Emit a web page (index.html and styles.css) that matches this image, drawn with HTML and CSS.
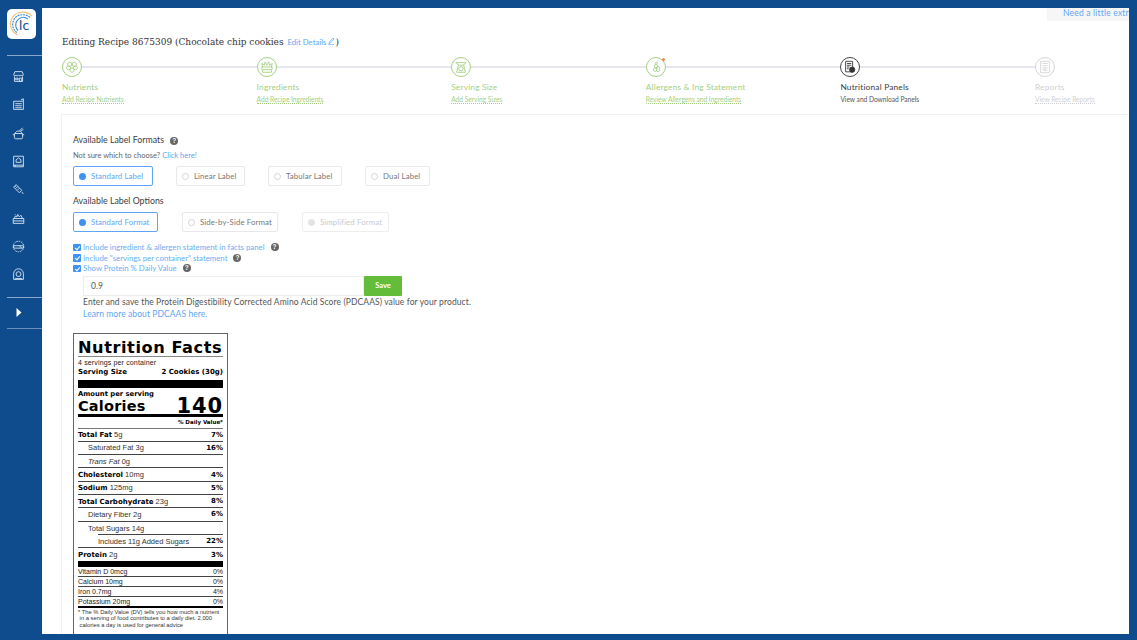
FILE: index.html
```html
<!DOCTYPE html>
<html lang="en">
<head>
<meta charset="utf-8">
<title>Editing Recipe</title>
<link rel="stylesheet" href="styles.css">
</head>
<body>
<div class="app">
  <nav class="side">
    <div class="logo">
      <svg class="logo-arcs" width="26" height="27" viewBox="0 0 26 27" fill="none"><path d="M24 5C18 -1 7 0 3.500 8c-2.500 6 0 13 6 16" stroke="#f3c27b" stroke-width="1.200"/><path d="M22 6.500C17 2 8 3 5.500 9.500c-2 5 0 10 4 12.500" stroke="#3f8fd6" stroke-width="1.200" stroke-dasharray="2 .8"/><path d="M20 8c-4-3-9-2-11.500 2.500-1.500 3.500-.5 7 1.500 9" stroke="#3f8fd6" stroke-width="1.100"/></svg>
      <span class="logo-text">lc</span>
    </div>
    <hr class="side-rule first">
    <ul class="side-icons">
      <li><svg viewBox="0 0 16 16"><path d="M2 6l1.500-4h9L14 6c0 1.500-3 1.500-3 0 0 1.500-3 1.500-3 0 0 1.500-3 1.500-3 0 0 1.500-3 1.500-3 0zM3 8v6h10V8M9 10h3v4H9zM4.500 10h3v2h-3z"/></svg></li>
      <li><svg viewBox="0 0 16 16"><path d="M2 4h12v10H2zM4 7h8M4 9.500h8M4 12h8M11 2l3-1v3"/></svg></li>
      <li><svg viewBox="0 0 16 16"><path d="M3 8h10v5a1.500 1.500 0 0 1-1.500 1.500h-7A1.500 1.500 0 0 1 3 13zM1 9.500h2M13 9.500h2M4 8c0-2 2-3 4-3s4 1 4 3M9 5l4-4M11 5l3-2"/></svg></li>
      <li><svg viewBox="0 0 16 16"><path d="M2 1.500h12v13H2zM2 12.500h12M5 9V6l3-2.500L11 6v3zM4 14.500v-2"/></svg></li>
      <li><svg viewBox="0 0 16 16"><path d="M2 5l3-3 7 7-3 3zM4 4l1 1M7 4.500l-2 2M9 6.500l-2 2M12 11l2 2.500"/></svg></li>
      <li><svg viewBox="0 0 16 16"><path d="M1.500 8h13v6h-13zM1.500 11h13M3 8l1-3 2 1 1-3 2 3 2-2 2 4M4 3l1 1"/></svg></li>
      <li><svg viewBox="0 0 16 16"><circle cx="8" cy="8" r="6.500" stroke-dasharray="2 1"/><path d="M2 7h12v3H2zM9 7l3 3"/></svg></li>
      <li><svg viewBox="0 0 16 16"><path d="M2 14V7a6 6 0 0 1 12 0v7z"/><circle cx="8" cy="7.500" r="3"/><path d="M4 14v-1h8v1"/></svg></li>
    </ul>
    <hr class="side-rule second">
    <div class="expand"><svg width="6" height="9" viewBox="0 0 6 9"><path d="M0.500 0l5 4.500-5 4.500z" fill="#fff"/></svg></div>
    <hr class="side-rule third">
  </nav>
  <main class="main">
    <div class="help-tab">Need a little extra help?</div>
    <h1 class="title">Editing Recipe 8675309 (Chocolate chip cookies <a class="edit">Edit Details <svg width="7" height="8" viewBox="0 0 7 8" fill="none"><path d="M1 7l.4-2 3.600-4 1 1-3.600 4zM0 7.700h6" stroke="#5da6f5" stroke-width=".7"/></svg></a>)</h1>

    <ol class="steps">
      <li class="step done">
        <div class="step-head"><span class="disc"><svg viewBox="0 0 16 16"><circle cx="5.500" cy="5" r="2.500"/><circle cx="10.500" cy="5" r="2.500"/><circle cx="4" cy="9" r="2.200"/><circle cx="12" cy="9" r="2.200"/><circle cx="8" cy="11.500" r="2.500"/></svg></span></div>
        <div class="step-name">Nutrients</div><a class="step-sub">Add Recipe Nutrients</a>
      </li>
      <li class="step done">
        <div class="step-head"><span class="disc"><svg viewBox="0 0 16 16"><path d="M2 8h12l-1 6H3zM3 8L2 4l3 2 1-4 2 4 2-4 1 4 3-2-1 4M3 11h10"/></svg></span></div>
        <div class="step-name">Ingredients</div><a class="step-sub">Add Recipe Ingredients</a>
      </li>
      <li class="step done">
        <div class="step-head"><span class="disc"><svg viewBox="0 0 16 16"><path d="M2 3h12M3 3c0 2 2 3 5 3s5-1 5-3M5 6L3 14h10l-2-8"/><circle cx="8" cy="10" r="2.500"/></svg></span></div>
        <div class="step-name">Serving Size</div><a class="step-sub">Add Serving Sizes</a>
      </li>
      <li class="step done">
        <div class="step-head"><span class="disc dot"><svg viewBox="0 0 16 16"><path d="M9 2c1 2 0 3-1 3s-1-1 0-2zM6 7a2 2 0 1 1 4 0 2 2 0 1 1-4 0zM5 11a2 2 0 1 1 4 0 2 2 0 1 1-4 0zM9 10.500a1.800 1.800 0 1 1 3 0 1.800 1.800 0 1 1-3 0z"/></svg></span></div>
        <div class="step-name">Allergens &amp; Ing Statement</div><a class="step-sub">Review Allergens and Ingredients</a>
      </li>
      <li class="step current">
        <div class="step-head"><span class="disc"><svg viewBox="0 0 16 16"><path d="M3 1.500h8v12H3zM4.500 4h5M4.500 6h5M4.500 8h3M4.500 10h2"/><circle cx="10.500" cy="11" r="3" fill="#333"/></svg></span></div>
        <div class="step-name">Nutritional Panels</div><span class="step-sub plain">View and Download Panels</span>
      </li>
      <li class="step todo">
        <div class="step-head"><span class="disc"><svg viewBox="0 0 16 16"><path d="M3 1.500h10v13H3zM5 4h6M5 6.500h6M5 9h6M5 11.500h6M8 9v4"/></svg></span></div>
        <div class="step-name">Reports</div><a class="step-sub">View Recipe Reports</a>
      </li>
    </ol>

    <section class="card">
      <h2 class="heading">Available Label Formats <span class="q">?</span></h2>
      <p class="hint">Not sure which to choose? <a class="link">Click here!</a></p>
      <div class="choices formats">
        <label class="choice on"><i class="radio"></i>Standard Label</label>
        <label class="choice"><i class="radio"></i>Linear Label</label>
        <label class="choice"><i class="radio"></i>Tabular Label</label>
        <label class="choice"><i class="radio"></i>Dual Label</label>
      </div>
      <h2 class="heading second">Available Label Options</h2>
      <div class="choices options">
        <label class="choice on"><i class="radio"></i>Standard Format</label>
        <label class="choice"><i class="radio"></i>Side-by-Side Format</label>
        <label class="choice off"><i class="radio"></i>Simplified Format</label>
      </div>
      <ul class="checks">
        <li><i class="box"></i>Include ingredient &amp; allergen statement in facts panel <span class="q">?</span></li>
        <li><i class="box"></i>Include "servings per container" statement <span class="q">?</span></li>
        <li><i class="box"></i>Show Protein % Daily Value <span class="q">?</span></li>
      </ul>
      <div class="pdcaas">
        <div class="entry"><div class="input">0.9</div><button class="save">Save</button></div>
        <p class="note">Enter and save the Protein Digestibility Corrected Amino Acid Score (PDCAAS) value for your product.</p>
        <a class="link more">Learn more about PDCAAS here.</a>
      </div>

      <div class="facts">
        <div class="f-title">Nutrition Facts</div>
        <div class="f-servings">4 servings per container</div>
        <div class="f-size"><b>Serving Size</b><b>2 Cookies (30g)</b></div>
        <div class="f-bar"></div>
        <div class="f-amount">Amount per serving</div>
        <div class="f-cal"><b>Calories</b><b class="f-num">140</b></div>
        <div class="f-dv">% Daily Value*</div>
        <div class="f-row"><span><b>Total Fat</b> 5g</span><b>7%</b></div>
        <div class="f-row in1"><span>Saturated Fat 3g</span><b>16%</b></div>
        <div class="f-row in1"><span><em>Trans Fat</em> 0g</span></div>
        <div class="f-row"><span><b>Cholesterol</b> 10mg</span><b>4%</b></div>
        <div class="f-row"><span><b>Sodium</b> 125mg</span><b>5%</b></div>
        <div class="f-row"><span><b>Total Carbohydrate</b> 23g</span><b>8%</b></div>
        <div class="f-row in1"><span>Dietary Fiber 2g</span><b>6%</b></div>
        <div class="f-row in1 partial"><span>Total Sugars 14g</span></div>
        <div class="f-row in2"><span>Includes 11g Added Sugars</span><b>22%</b></div>
        <div class="f-row last"><span><b>Protein</b> 2g</span><b>3%</b></div>
        <div class="f-bar small"></div>
        <div class="f-vit"><span>Vitamin D 0mcg</span><span>0%</span></div>
        <div class="f-vit"><span>Calcium 10mg</span><span>0%</span></div>
        <div class="f-vit"><span>Iron 0.7mg</span><span>4%</span></div>
        <div class="f-vit end"><span>Potassium 20mg</span><span>0%</span></div>
        <p class="f-foot">* The % Daily Value (DV) tells you how much a nutrient<br>&nbsp;in a serving of food contributes to a daily diet. 2,000<br>&nbsp;calories a day is used for general advice</p>
      </div>
    </section>
  </main>
</div>
</body>
</html>
```
FILE: styles.css
```css
* { box-sizing: border-box; }
html, body { margin: 0; height: 100%; overflow: hidden; background: #0e4c8e; }
.app { display: flex; width: 1129px; height: 626px; margin-top: 8px; }

.side { width: 42px; flex: none; padding-top: 1px; display: flex; flex-direction: column; align-items: flex-end; }
.logo { position: relative; width: 28.500px; height: 30px; margin-right: 6.500px; background: #fff; border-radius: 5px; display: flex; align-items: center; justify-content: center; }
.logo-text { position: absolute; left: 12px; top: 8px; font: 400 14px/16px "Lato", sans-serif; letter-spacing: .3px; color: #15508f; }
.side-rule { width: 35px; height: 1px; margin: 0; border: 0; background: #8ba8c9; }
.side-rule.first { margin-top: 16px; }
.side-rule.second { margin-top: 8px; }
.side-icons { list-style: none; margin: 6.500px 0 0; padding: 0; width: 42px; }
.side-icons li { height: 28.300px; padding-left: 12px; display: flex; align-items: center; }
.side-icons svg { width: 13px; height: 13px; fill: none; stroke: #dce6f1; stroke-width: 1.100; }
.expand { width: 42px; height: 30px; padding-left: 16px; display: flex; align-items: center; }
.side-rule.third { background: #6d90b8; }

.main { position: relative; flex: 1; min-width: 0; background: #fff; overflow: hidden; padding-left: 19px; font-family: "Lato", "Open Sans", sans-serif; }
.help-tab { position: absolute; top: 0; right: 0; width: 82px; height: 13px; padding-left: 16px; background: #f6f6f6; color: #5ea6f6; font-size: 8.500px; line-height: 11px; white-space: nowrap; overflow: hidden; letter-spacing: .2px; }
.title { margin: 28px 0 0 1px; font: 400 10px/12px "DejaVu Serif Condensed", "DejaVu Serif", serif; color: #333; white-space: nowrap; }
.edit { font: 7.800px/12px "Lato", sans-serif; color: #5da6f5; margin-left: 1px; }

.steps { list-style: none; margin: 8px 0 0 1px; padding: 0; display: flex; }
.step { width: 194.600px; flex: none; }
.step-head { display: flex; align-items: center; height: 21px; position: relative; }
.step-head::after { content: ""; flex: 1; height: 2px; background: #e6e6ee; }
.step.todo .step-head::after { display: none; }
.disc { position: relative; width: 20px; height: 20px; flex: none; border: 1px solid #a3cf7f; border-radius: 50%; display: flex; align-items: center; justify-content: center; background: #fff; }
.disc svg { width: 14px; height: 14px; fill: none; stroke: #a3cf7f; stroke-width: 1; }
.disc.dot::after { content: ""; position: absolute; top: 0; right: 0; width: 3px; height: 3px; border-radius: 50%; background: #e98a4a; }
.step-name { margin-top: 4px; font-size: 8.300px; line-height: 12px; color: #a3cf7f; letter-spacing: .2px; white-space: nowrap; }
.step-sub { display: table; margin-top: 2px; font-size: 6.600px; line-height: 8px; color: #a3cf7f; border-bottom: 1px dotted #a3cf7f; white-space: nowrap; }
.step.current .disc { border-color: #444; }
.step.current .disc svg { stroke: #333; }
.step.current .step-name { color: #3c3c3c; }
.step-sub.plain { color: #555; border-bottom: 0; }
.step.todo .disc { border-color: #d5d5d8; }
.step.todo .disc svg { stroke: #d5d5d8; }
.step.todo .step-name { color: #cfcfd2; }
.step.todo .step-sub { color: #cfcfd2; border-bottom-color: #cfcfd2; }

.card { margin: 10px 0 0; padding: 19px 0 0 11px; height: 540px; border-top: 1px solid #f0f0f7; border-left: 1px solid #f0f0f7; }
.heading { margin: 0; font-size: 8.800px; line-height: 12px; font-weight: 400; color: #3d3d3d; white-space: nowrap; }
.heading.second { margin-top: 9px; }
.q { display: inline-block; width: 8px; height: 8px; margin-left: 4px; border-radius: 50%; background: #666; color: #fff; font: 700 6.500px/8px "Liberation Sans", sans-serif; text-align: center; vertical-align: middle; }
.hint { margin: 5px 0 0; font-size: 7.500px; line-height: 10px; color: #666; }
.link { color: #5da6f5; }
.choices { display: flex; gap: 23px; margin-top: 5px; }
.options { gap: 24px; margin-top: 5px; }
.choice { height: 20px; display: flex; align-items: center; padding-left: 5px; border: 1px solid #e8e8ec; border-radius: 2px; font-size: 7.800px; color: #777; letter-spacing: .12px; white-space: nowrap; }
.formats .choice { width: 74px; }
.formats .choice:nth-child(1) { width: 80px; }
.formats .choice:nth-child(2) { width: 69px; }
.formats .choice:nth-child(4) { width: 65px; }
.options .choice { width: 96px; }
.options .choice:nth-child(1) { width: 85px; }
.options .choice:nth-child(3) { width: 87px; }
.radio { width: 7px; height: 7px; margin-right: 5px; flex: none; border: 1px solid #d5d5d8; border-radius: 50%; }
.choice.on { border-color: #5da6f5; color: #5da6f5; }
.choice.on .radio { background: #3e93f0; border: 2px solid #3e93f0; }
.choice.off { color: #c9c9cd; border-color: #eeeeee; }
.choice.off .radio { background: #e4e4e8; border-color: #e4e4e8; }

.checks { list-style: none; margin: 10px 0 0; padding: 0; }
.checks li { display: flex; align-items: center; height: 10.500px; font-size: 7.800px; color: #6aaef5; white-space: nowrap; }
.checks .q { margin-left: 6px; }
.box { width: 7.500px; height: 7.500px; margin-right: 2.500px; flex: none; border-radius: 1px; background: #3e93f0; position: relative; }
.box::after { content: ""; position: absolute; left: 2.500px; top: 1px; width: 2px; height: 4px; border: solid #fff; border-width: 0 1px 1px 0; transform: rotate(40deg); }

.pdcaas { margin: 2px 0 0 10px; }
.entry { display: flex; }
.input { width: 281px; height: 20px; padding-left: 7px; border: 1px solid #ececec; font-size: 8.500px; line-height: 18px; color: #555; }
.save { width: 38px; height: 20px; padding: 0; border: 0; border-radius: 1px; background: #63bd3b; color: #fff; font: 700 7.500px "Lato", sans-serif; }
.note { margin: 0; font-size: 8.500px; line-height: 12px; color: #555; letter-spacing: .1px; white-space: nowrap; }
.more { display: block; font-size: 8.500px; line-height: 12px; letter-spacing: .08px; }

.facts { width: 155px; margin-top: 13px; padding: 0 4px 12px; border: 1px solid #666; border-bottom: 0; font-family: "Liberation Sans", Arial, sans-serif; color: #000; }
.f-title { height: 23px; font: 700 16.200px/28px "DejaVu Sans", sans-serif; letter-spacing: .55px; border-bottom: 1px solid #888; white-space: nowrap; }
.f-servings { font-size: 7px; line-height: 11px; color: #222; letter-spacing: .15px; }
.f-size { display: flex; justify-content: space-between; font: 700 7px/9px "DejaVu Sans", sans-serif; height: 10px; }
.f-bar { height: 8px; margin-top: 2px; background: #000; }
.f-bar.small { height: 6px; margin-top: 0; }
.f-amount { font: 700 6.800px/9px "DejaVu Sans", sans-serif; margin-top: 2px; }
.f-cal { display: flex; justify-content: space-between; align-items: flex-end; height: 18px; border-bottom: 3px solid #000; font: 700 14.500px/14px "DejaVu Sans", sans-serif; letter-spacing: .2px; padding-bottom: 1px; }
.f-num { font-size: 21px; line-height: 14px; letter-spacing: .9px; }
.f-dv { height: 12px; text-align: right; border-bottom: 1px solid #777; font: 700 5.500px/11px "DejaVu Sans", sans-serif; }
.f-row { display: flex; justify-content: space-between; align-items: center; height: 13.300px; border-bottom: 1px solid #444; font-size: 7.500px; color: #333; white-space: nowrap; }
.f-row b { font-family: "DejaVu Sans", sans-serif; font-size: 7px; color: #000; }
.f-row.in1 { padding-left: 10px; }
.f-row.in2 { padding-left: 20px; }
.f-row.partial { border-bottom: 0; background: linear-gradient(#444, #444) right bottom / 125px 1px no-repeat; }
.f-row.last { border-bottom: 0; }
.f-vit { display: flex; justify-content: space-between; height: 9.800px; border-bottom: 1px solid #444; font-size: 7px; line-height: 9px; color: #222; }
.f-vit.end { height: 11px; border-bottom: 2px solid #000; }
.f-foot { margin: 1px 0 0; font-size: 5.800px; line-height: 6.500px; color: #333; white-space: nowrap; }
```
